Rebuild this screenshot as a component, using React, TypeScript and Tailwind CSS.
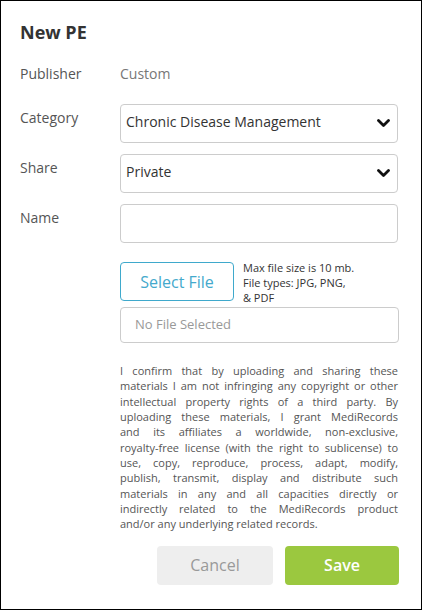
import React from "react";

const LINES = [
  "I confirm that by uploading and sharing these",
  "materials I am not infringing any copyright or other",
  "intellectual property rights of a third party. By",
  "uploading these materials, I grant MediRecords",
  "and its affiliates a worldwide, non-exclusive,",
  "royalty-free license (with the right to sublicense) to",
  "use, copy, reproduce, process, adapt, modify,",
  "publish, transmit, display and distribute such",
  "materials in any and all capacities directly or",
  "indirectly related to the MediRecords product",
  "and/or any underlying related records.",
];

function Chevron() {
  return (
    <svg width="13" height="9" viewBox="0 0 13 9" className="shrink-0">
      <polyline points="1.5,1.5 6.5,6.5 11.5,1.5" fill="none" stroke="#111" strokeWidth="2.8" strokeLinecap="round" strokeLinejoin="round" />
    </svg>
  );
}

function Select({ value }: { value: string }) {
  return (
    <div className="h-[39px] w-[278px] rounded-[4px] border border-[#cccccc] flex items-center justify-between pl-[5px] pr-[7px] text-[14px] text-[#333]">
      <span className="pb-[4px]">{value}</span>
      <Chevron />
    </div>
  );
}

export default function App() {
  return (
    <div
      className="w-[422px] h-[610px] border border-black bg-white pl-[19px] pt-[19px] text-[#555]"
      style={{ fontFamily: '"Open Sans", sans-serif' }}
    >
      <div className="text-[18px] leading-[24px] font-bold text-[#333]">New PE</div>

      <div className="mt-[20px] flex text-[14px] leading-[20px]">
        <div className="w-[100px]">Publisher</div>
        <div className="text-[#777]">Custom</div>
      </div>

      <div className="mt-[20px] flex">
        <div className="w-[100px] pt-[4px] text-[14px] leading-[20px]">Category</div>
        <Select value="Chronic Disease Management" />
      </div>

      <div className="mt-[11px] flex">
        <div className="w-[100px] pt-[4px] text-[14px] leading-[20px]">Share</div>
        <Select value="Private" />
      </div>

      <div className="mt-[11px] flex">
        <div className="w-[100px] pt-[4px] text-[14px] leading-[20px]">Name</div>
        <div className="h-[39px] w-[278px] rounded-[4px] border border-[#cccccc]" />
      </div>

      <div className="ml-[100px] w-[279px]">
        <div className="mt-[19px] flex items-start h-[39px]">
          <div className="h-[39px] w-[114px] shrink-0 rounded-[4px] border border-[#3fa9cc] flex items-center justify-center text-[16px] text-[#44a9cc]">
            Select File
          </div>
          <div className="ml-[9px] mt-[-2px] text-[11px] leading-[15px] text-[#333]">
            Max file size is 10 mb.
            <br />
            File types: JPG, PNG,
            <br />
            &amp; PDF
          </div>
        </div>

        <div className="mt-[6px] h-[36px] w-[279px] rounded-[4px] border border-[#cccccc] flex items-center pl-[14px] text-[13px] text-[#999]">
          No File Selected
        </div>

        <div className="mt-[20px] w-[278px] text-[11px] leading-[15.35px] text-[#555]">
          {LINES.map((l, i) => (
            <div
              key={i}
              className={
                i < LINES.length - 1
                  ? "text-justify [text-align-last:justify] whitespace-nowrap"
                  : "text-left whitespace-nowrap"
              }
            >
              {l}
            </div>
          ))}
        </div>

        <div className="mt-[14px] flex justify-end gap-[12px]">
          <div className="h-[39px] w-[116px] rounded-[4px] bg-[#eeeeee] flex items-center justify-center text-[16px] text-[#999]">
            Cancel
          </div>
          <div className="h-[39px] w-[114px] rounded-[4px] bg-[#9bc83f] flex items-center justify-center text-[16px] font-semibold text-white">
            Save
          </div>
        </div>
      </div>
    </div>
  );
}
